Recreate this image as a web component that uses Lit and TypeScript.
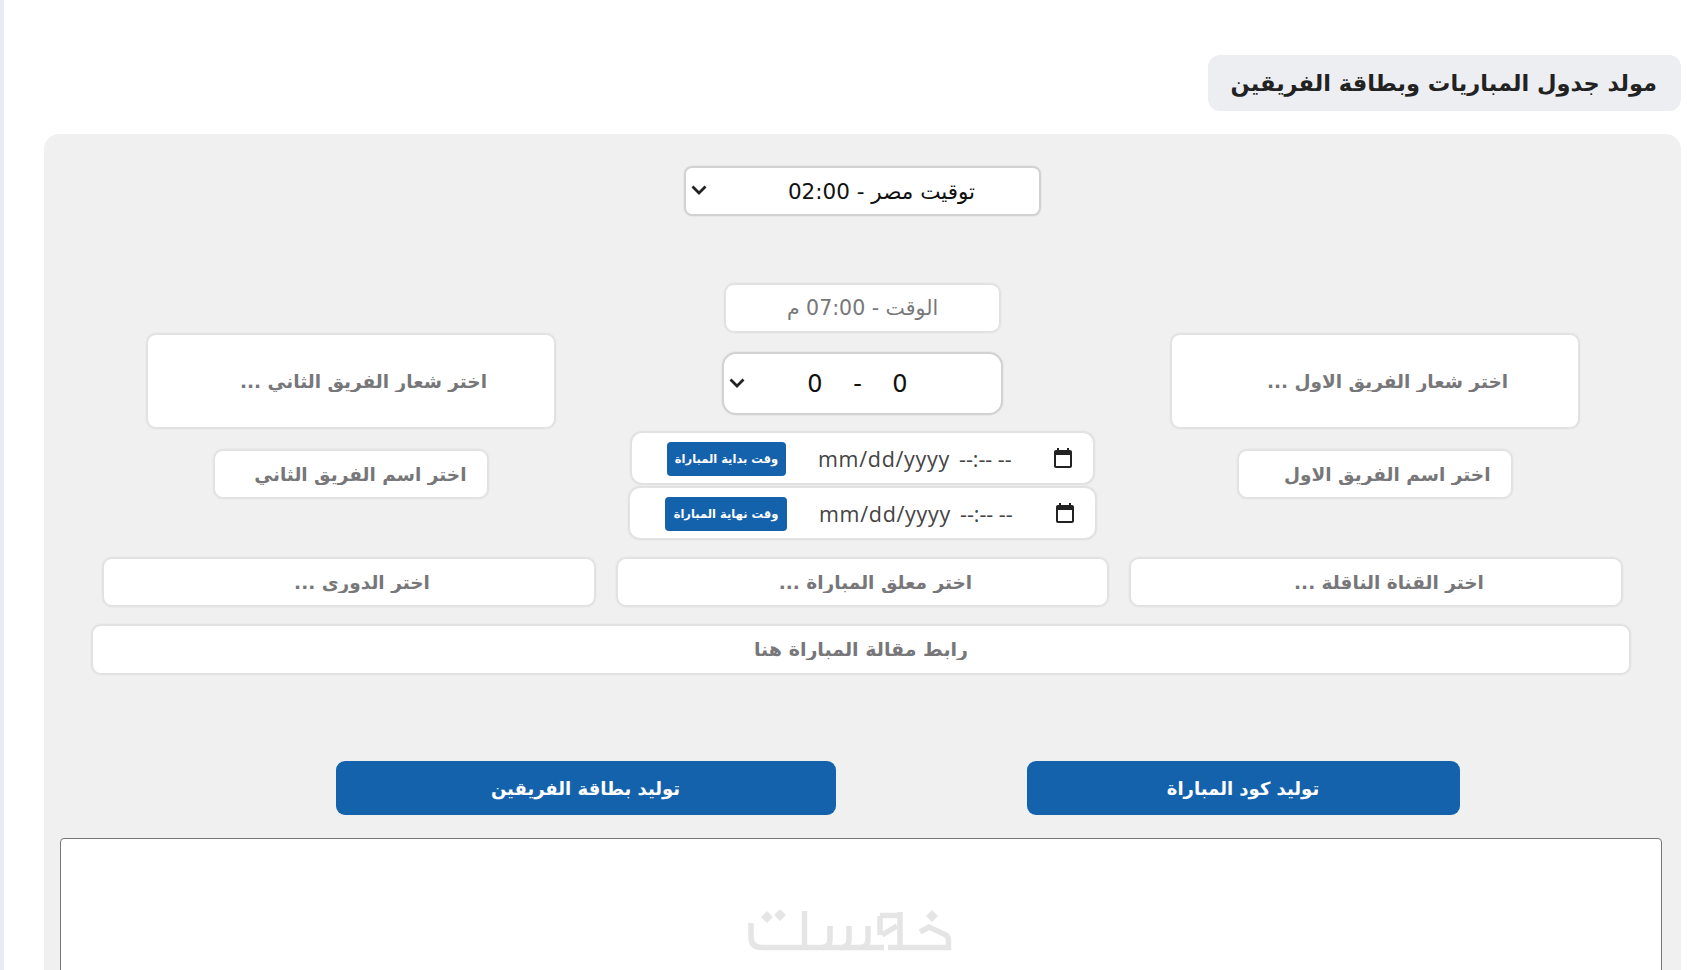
import { LitElement, css, html } from "lit"
import { customElement } from "lit/decorators.js"

const chevron = html`<svg class="chev" viewBox="0 0 16 10" fill="none" stroke="#222" stroke-width="2.8">
  <path d="M1.5 1.5l6.5 6.5 6.5-6.5" />
</svg>`

const calendar = html`<svg class="cal" viewBox="3 1 18 20" fill="#222">
  <path
    d="M19 3h-1V1h-2v2H8V1H6v2H5c-1.11 0-1.99.9-1.99 2L3 19c0 1.1.89 2 2 2h14c1.1 0 2-.9 2-2V5c0-1.1-.9-2-2-2zm0 16H5V8h14v11z"
  />
</svg>`

@customElement("app-root")
export class AppRoot extends LitElement {
  render() {
    return html`
      <div class="page" dir="rtl">
        <div class="title-row"><h2 class="title">مولد جدول المباريات وبطاقة الفريقين</h2></div>
        <section class="panel">
          <div class="select-wrap tz-wrap">
            <select class="tz">
              <option>توقيت مصر - 02:00</option>
            </select>
            ${chevron}
          </div>

          <div class="match-grid">
            <div class="side">
              <input class="field logo" placeholder="اختر شعار الفريق الاول ..." />
              <input class="field name" placeholder="اختر اسم الفريق الاول" />
            </div>
            <div class="middle">
              <input class="field time" placeholder="الوقت - 07:00 م" />
              <div class="select-wrap score-wrap">
                <select class="score">
                  <option>0&nbsp;&nbsp;&nbsp;&nbsp;-&nbsp;&nbsp;&nbsp;&nbsp;0</option>
                </select>
                ${chevron}
              </div>
              <div class="dates">
                <div class="date-box first" dir="ltr">
                  <span class="pill" dir="rtl">وقت بداية المباراة</span>
                  <span class="date-text">mm/dd/yyyy</span>
                  <span class="date-text clock">--:-- --</span>
                  ${calendar}
                </div>
                <div class="date-box" dir="ltr">
                  <span class="pill wide" dir="rtl">وقت نهاية المباراة</span>
                  <span class="date-text">mm/dd/yyyy</span>
                  <span class="date-text clock">--:-- --</span>
                  ${calendar}
                </div>
              </div>
            </div>
            <div class="side">
              <input class="field logo" placeholder="اختر شعار الفريق الثاني ..." />
              <input class="field name" placeholder="اختر اسم الفريق الثاني" />
            </div>
          </div>

          <div class="three">
            <input class="field shifted" placeholder="اختر القناة الناقلة ..." />
            <input class="field shifted" placeholder="اختر معلق المباراة ..." />
            <input class="field shifted" placeholder="اختر الدوري ..." />
          </div>

          <input class="field url" placeholder="رابط مقالة المباراة هنا" />

          <div class="actions">
            <button class="btn code">توليد كود المباراة</button>
            <button class="btn card">توليد بطاقة الفريقين</button>
          </div>

          <div class="output">
            <svg class="mark" viewBox="748 909 204 41" fill="none" stroke="#e5e5e5" stroke-width="5.5">
              <path d="M751 922V936Q751 946.5 762 946.5H884" />
              <path d="M804.5 910V946" />
              <path d="M830 925V938Q830 946.5 822 946.5" />
              <path d="M849 925V938Q849 946.5 841 946.5" />
              <path d="M868 925V938Q868 946.5 860 946.5" />
              <path d="M880 915V934M880 914.5H900M900 911V949M882 934L897 925M888 946.5H900" />
              <path d="M920 931L929 926L946 934Q948.5 936 948.5 940V946.5H902" />
              <path
                fill="#e5e5e5"
                stroke="none"
                d="M767 910l6 6-6 6-6-6zM780 908l6 6-6 6-6-6zM932 909l6 6-6 6-6-6z"
              />
            </svg>
          </div>
        </section>
      </div>
    `
  }

  static styles = css`
    :host {
      display: block;
      height: 970px;
      overflow: hidden;
      background: #fff;
      font-family: "DejaVu Sans", "Noto Sans", sans-serif;
    }
    * {
      box-sizing: border-box;
    }
    .page {
      padding: 55px 19px 0 40px;
      border-left: 4px solid #e8ebf3;
    }
    .title-row {
      display: flex;
      margin-bottom: 23px;
    }
    .title {
      margin: 0;
      height: 56px;
      width: 473px;
      padding: 0 24px;
      display: flex;
      align-items: center;
      border-radius: 12px;
      background: #edeef1;
      color: #222;
      font-size: 22.5px;
      font-weight: 600;
      white-space: nowrap;
    }
    .panel {
      padding-top: 32px;
      border-radius: 15px;
      background: #f0f0f0;
      display: flex;
      flex-direction: column;
      align-items: center;
    }
    .select-wrap {
      position: relative;
    }
    .tz-wrap {
      margin-bottom: 67px;
    }
    .chev {
      position: absolute;
      left: 7px;
      top: 50%;
      width: 16px;
      height: 10px;
      margin-top: -6px;
      pointer-events: none;
    }
    select {
      appearance: none;
      display: block;
      font-family: inherit;
      color: #111;
      background: #fff;
      text-align: center;
      border: 2px solid #d2d2d2;
      box-shadow: 0 0 0 1px #e8e8e8;
      outline: none;
    }
    .tz {
      width: 357px;
      height: 50px;
      padding: 0 0 0 38px;
      border-radius: 8px;
      font-size: 21.5px;
    }
    .match-grid {
      display: grid;
      grid-template-columns: 410px 470px 410px;
      column-gap: 72px;
      margin-bottom: 17px;
    }
    .side {
      padding-top: 50px;
      display: flex;
      flex-direction: column;
      align-items: center;
      gap: 20px;
    }
    .field {
      height: 50px;
      border: 2px solid #e2e2e2;
      border-radius: 10px;
      background: #fff;
      box-shadow: 0 0 0 1px #ececec;
      font-family: inherit;
      font-size: 18.5px;
      font-weight: 600;
      outline: none;
    }
    .field::placeholder {
      color: #77777a;
      opacity: 1;
    }
    .logo {
      width: 410px;
      height: 96px;
      padding: 0 0 0 26px;
      text-align: center;
    }
    .name {
      width: 276px;
      padding: 0 20px;
      text-align: right;
    }
    .middle {
      display: flex;
      flex-direction: column;
      align-items: center;
    }
    .time {
      width: 277px;
      text-align: center;
      margin-bottom: 19px;
      font-size: 20.5px;
      font-weight: 400;
    }
    .score-wrap {
      margin-bottom: 16px;
    }
    .score {
      width: 281px;
      height: 63px;
      padding: 0 10px 0 0;
      border-radius: 14px;
      font-size: 24px;
    }
    .dates {
      display: flex;
      flex-direction: column;
      align-items: center;
      gap: 1px;
    }
    .date-box {
      width: 469px;
      height: 54px;
      padding: 0 21px 0 35px;
      display: flex;
      align-items: center;
      border: 2px solid #e2e2e2;
      border-radius: 12px;
      background: #fff;
      box-shadow: 0 0 0 1px #ececec;
    }
    .date-box.first {
      width: 465px;
    }
    .date-text {
      margin-left: 32px;
      font-family: "Open Sans", sans-serif;
      font-size: 21.5px;
      letter-spacing: 0.7px;
      color: #444;
      white-space: nowrap;
    }
    .clock {
      margin-left: 9px;
      letter-spacing: 0;
    }
    .cal {
      width: 18px;
      height: 20px;
      margin-left: auto;
    }
    .pill {
      width: 119px;
      height: 34px;
      margin-top: 2px;
      display: flex;
      align-items: center;
      justify-content: center;
      border-radius: 4px;
      background: #1562ac;
      color: #fff;
      font-size: 11.5px;
      font-weight: 700;
      white-space: nowrap;
    }
    .pill.wide {
      width: 122px;
    }
    .three {
      width: 1521px;
      display: grid;
      grid-template-columns: 494px 493px 494px;
      column-gap: 20px;
      margin-bottom: 17px;
    }
    .shifted {
      width: 100%;
      padding: 0 0 0 26px;
      text-align: center;
    }
    .url {
      width: 1540px;
      height: 51px;
      margin: 0 3px 86px 0;
      padding-bottom: 3px;
      font-size: 19px;
      text-align: center;
    }
    .actions {
      width: 1196px;
      padding-left: 72px;
      margin: 0 2px 23px 0;
      display: flex;
      justify-content: space-between;
    }
    .btn {
      height: 54px;
      border: 0;
      border-radius: 9px;
      background: #1562ac;
      color: #fff;
      font-family: inherit;
      font-size: 18px;
      font-weight: 700;
    }
    .code {
      width: 433px;
    }
    .card {
      width: 500px;
    }
    .output {
      width: 1602px;
      height: 300px;
      margin-right: 3px;
      padding-top: 71px;
      display: flex;
      justify-content: center;
      border: 1px solid #767676;
      border-radius: 4px;
      background: #fff;
    }
    .mark {
      width: 204px;
      height: 41px;
      margin-right: 22px;
    }
  `
}

declare global {
  interface HTMLElementTagNameMap {
    "app-root": AppRoot
  }
}
